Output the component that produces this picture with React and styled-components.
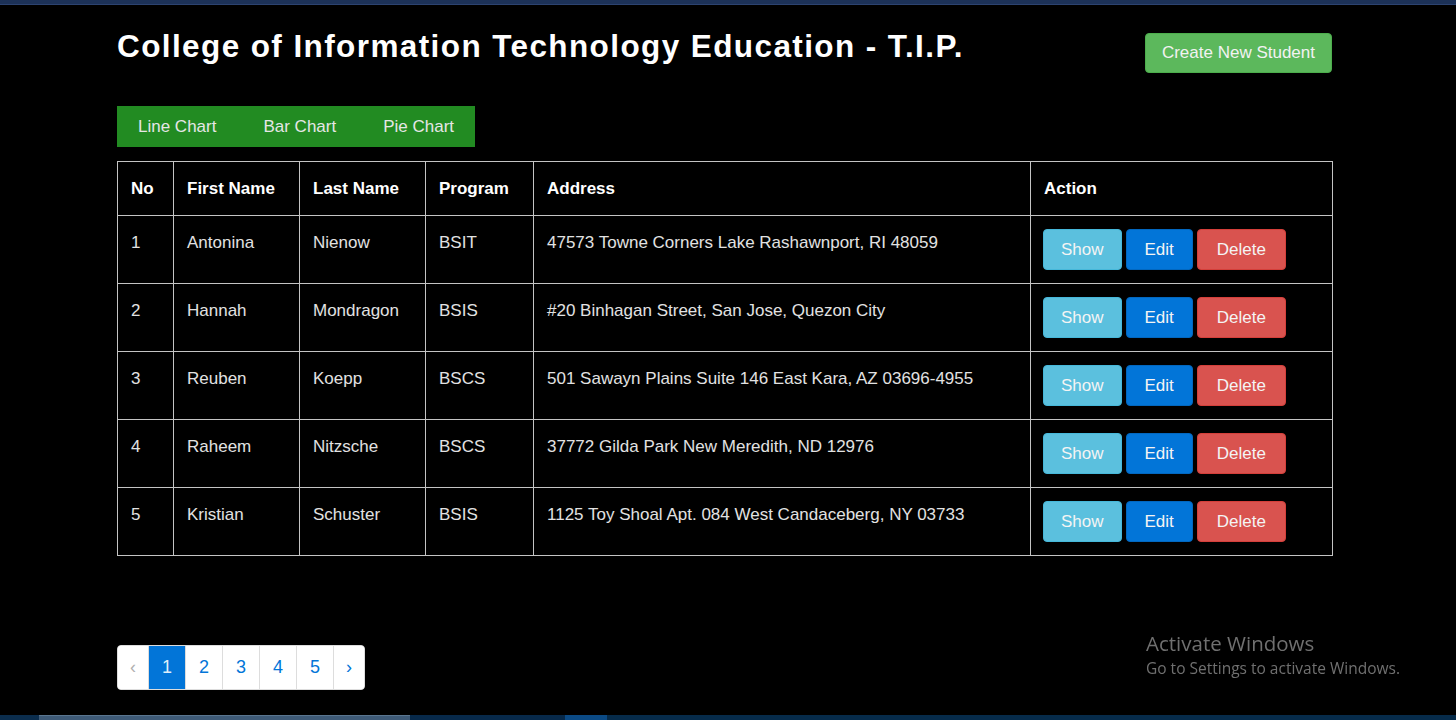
import React from "react";
import styled, { createGlobalStyle } from "styled-components";

const GlobalStyle = createGlobalStyle`
  html, body {
    margin: 0;
    padding: 0;
    background: #000;
  }
  body {
    font-family: "Liberation Sans", Arial, Helvetica, sans-serif;
    color: #fff;
  }
  * { box-sizing: border-box; }
`;

const Page = styled.div`
  min-height: 100vh;
  display: flex;
  flex-direction: column;
  background: #000;
`;

const TopStrip = styled.div`
  height: 5px;
  background: #1c3157;
  border-bottom: 1px solid #2c4370;
`;

const Main = styled.main`
  flex: 1;
  width: 1215px;
  margin-left: 117px;
  padding-top: 21px;
`;

const Header = styled.header`
  display: flex;
  justify-content: space-between;
  align-items: flex-start;
`;

const Title = styled.h1`
  margin: 0;
  font-size: 31.5px;
  line-height: 40px;
  font-weight: 700;
  color: #fff;
  letter-spacing: 1.4px;
`;

const CreateButton = styled.button`
  margin-top: 7px;
  height: 40px;
  padding: 0 16px;
  border: 1px solid #4cae4c;
  border-radius: 4px;
  background: #5cb85c;
  color: #f2f2f2;
  font-family: inherit;
  font-size: 17px;
  cursor: pointer;
`;

const Tabs = styled.nav`
  margin-top: 33px;
  display: inline-flex;
  gap: 5px;
  background: #228b22;
  height: 41px;
`;

const Tab = styled.a`
  display: block;
  padding: 0 21px;
  line-height: 41px;
  font-size: 17px;
  color: #e6e6e6;
  text-decoration: none;
  cursor: pointer;
`;

const Table = styled.table`
  margin-top: 14px;
  width: 1215px;
  border-collapse: collapse;
  table-layout: fixed;
  border: 1px solid #c4c4c4;
`;

const Th = styled.th`
  border: 1px solid #c4c4c4;
  padding: 13px 13px;
  line-height: 27px;
  font-size: 17px;
  font-weight: 700;
  color: #fff;
  text-align: left;
  vertical-align: top;
`;

const Td = styled.td`
  border: 1px solid #c4c4c4;
  padding: 13px 13px 13px ${(p) => (p.$tight ? "12px" : "13px")};
  line-height: 27px;
  height: 67px;
  font-size: 17px;
  color: #e2e2e2;
  text-align: left;
  vertical-align: top;
`;

const Actions = styled.div`
  display: flex;
  gap: 4px;
`;

const ActionButton = styled.button`
  height: 41px;
  padding: 0 ${(p) => p.$pad}px;
  border: 1px solid ${(p) => p.$border};
  border-radius: 4px;
  background: ${(p) => p.$bg};
  color: #f4f4f4;
  font-family: inherit;
  font-size: 17px;
  cursor: pointer;
`;

const Pagination = styled.ul`
  margin: 89px 0 0 0;
  padding: 0;
  list-style: none;
  display: inline-flex;
  background: #fff;
  border: 1px solid #dddddd;
  border-radius: 4px;
  overflow: hidden;
`;

const PageItem = styled.li`
  padding: 0 ${(p) => (p.$arrow ? "12px" : "13px")};
  height: 43px;
  line-height: 43px;
  text-align: center;
  font-size: 18px;
  border-left: ${(p) => (p.$first ? "none" : "1px solid #dddddd")};
  background: ${(p) => (p.$active ? "#0275d8" : "#fff")};
  color: ${(p) => (p.$active ? "#dfeefa" : p.$disabled ? "#b0b0b0" : "#0275d8")};
  cursor: pointer;
`;

const BottomStrip = styled.div`
  height: 5px;
  display: flex;
`;

const Segment = styled.div`
  width: ${(p) => p.$w}px;
  flex: ${(p) => (p.$grow ? 1 : "none")};
  background: ${(p) => p.$bg};
  border-top: 1px solid ${(p) => p.$top || p.$bg};
`;

const Watermark = styled.div`
  position: fixed;
  left: 1146px;
  top: 630px;
  font-family: "Open Sans", "Noto Sans", sans-serif;
  color: #707070;
  pointer-events: none;
`;

const WatermarkTitle = styled.div`
  font-size: 20.5px;
  line-height: 27px;
`;

const WatermarkText = styled.div`
  font-size: 15.5px;
  line-height: 22px;
`;

const students = [
  { no: 1, first: "Antonina", last: "Nienow", program: "BSIT", address: "47573 Towne Corners Lake Rashawnport, RI 48059" },
  { no: 2, first: "Hannah", last: "Mondragon", program: "BSIS", address: "#20 Binhagan Street, San Jose, Quezon City" },
  { no: 3, first: "Reuben", last: "Koepp", program: "BSCS", address: "501 Sawayn Plains Suite 146 East Kara, AZ 03696-4955" },
  { no: 4, first: "Raheem", last: "Nitzsche", program: "BSCS", address: "37772 Gilda Park New Meredith, ND 12976" },
  { no: 5, first: "Kristian", last: "Schuster", program: "BSIS", address: "1125 Toy Shoal Apt. 084 West Candaceberg, NY 03733" },
];

const colWidths = [56, 126, 126, 108, 497, 302];

export default function App() {
  return (
    <Page>
      <GlobalStyle />
      <TopStrip />
      <Main>
        <Header>
          <Title>College of Information Technology Education - T.I.P.</Title>
          <CreateButton>Create New Student</CreateButton>
        </Header>

        <Tabs>
          <Tab>Line Chart</Tab>
          <Tab>Bar Chart</Tab>
          <Tab>Pie Chart</Tab>
        </Tabs>

        <Table>
          <colgroup>
            {colWidths.map((w, i) => (
              <col key={i} style={{ width: w }} />
            ))}
          </colgroup>
          <thead>
            <tr>
              <Th>No</Th>
              <Th>First Name</Th>
              <Th>Last Name</Th>
              <Th>Program</Th>
              <Th>Address</Th>
              <Th>Action</Th>
            </tr>
          </thead>
          <tbody>
            {students.map((s) => (
              <tr key={s.no}>
                <Td>{s.no}</Td>
                <Td>{s.first}</Td>
                <Td>{s.last}</Td>
                <Td>{s.program}</Td>
                <Td>{s.address}</Td>
                <Td $tight>
                  <Actions>
                    <ActionButton $pad={17} $bg="#5bc0de" $border="#46b8da">Show</ActionButton>
                    <ActionButton $pad={18} $bg="#0275d8" $border="#0267bf">Edit</ActionButton>
                    <ActionButton $pad={19} $bg="#d9534f" $border="#d43f3a">Delete</ActionButton>
                  </Actions>
                </Td>
              </tr>
            ))}
          </tbody>
        </Table>

        <div>
          <Pagination>
            <PageItem $first $arrow $disabled>‹</PageItem>
            <PageItem $active>1</PageItem>
            <PageItem>2</PageItem>
            <PageItem>3</PageItem>
            <PageItem>4</PageItem>
            <PageItem>5</PageItem>
            <PageItem $arrow>›</PageItem>
          </Pagination>
        </div>
      </Main>
      <BottomStrip>
        <Segment $w={39} $bg="#0b2d4d" />
        <Segment $w={371} $bg="#3e5a77" $top="#5a7690" />
        <Segment $w={155} $bg="#07294a" />
        <Segment $w={42} $bg="#0b4a85" />
        <Segment $grow $bg="#062b4a" />
      </BottomStrip>
      <Watermark>
        <WatermarkTitle>Activate Windows</WatermarkTitle>
        <WatermarkText>Go to Settings to activate Windows.</WatermarkText>
      </Watermark>
    </Page>
  );
}
